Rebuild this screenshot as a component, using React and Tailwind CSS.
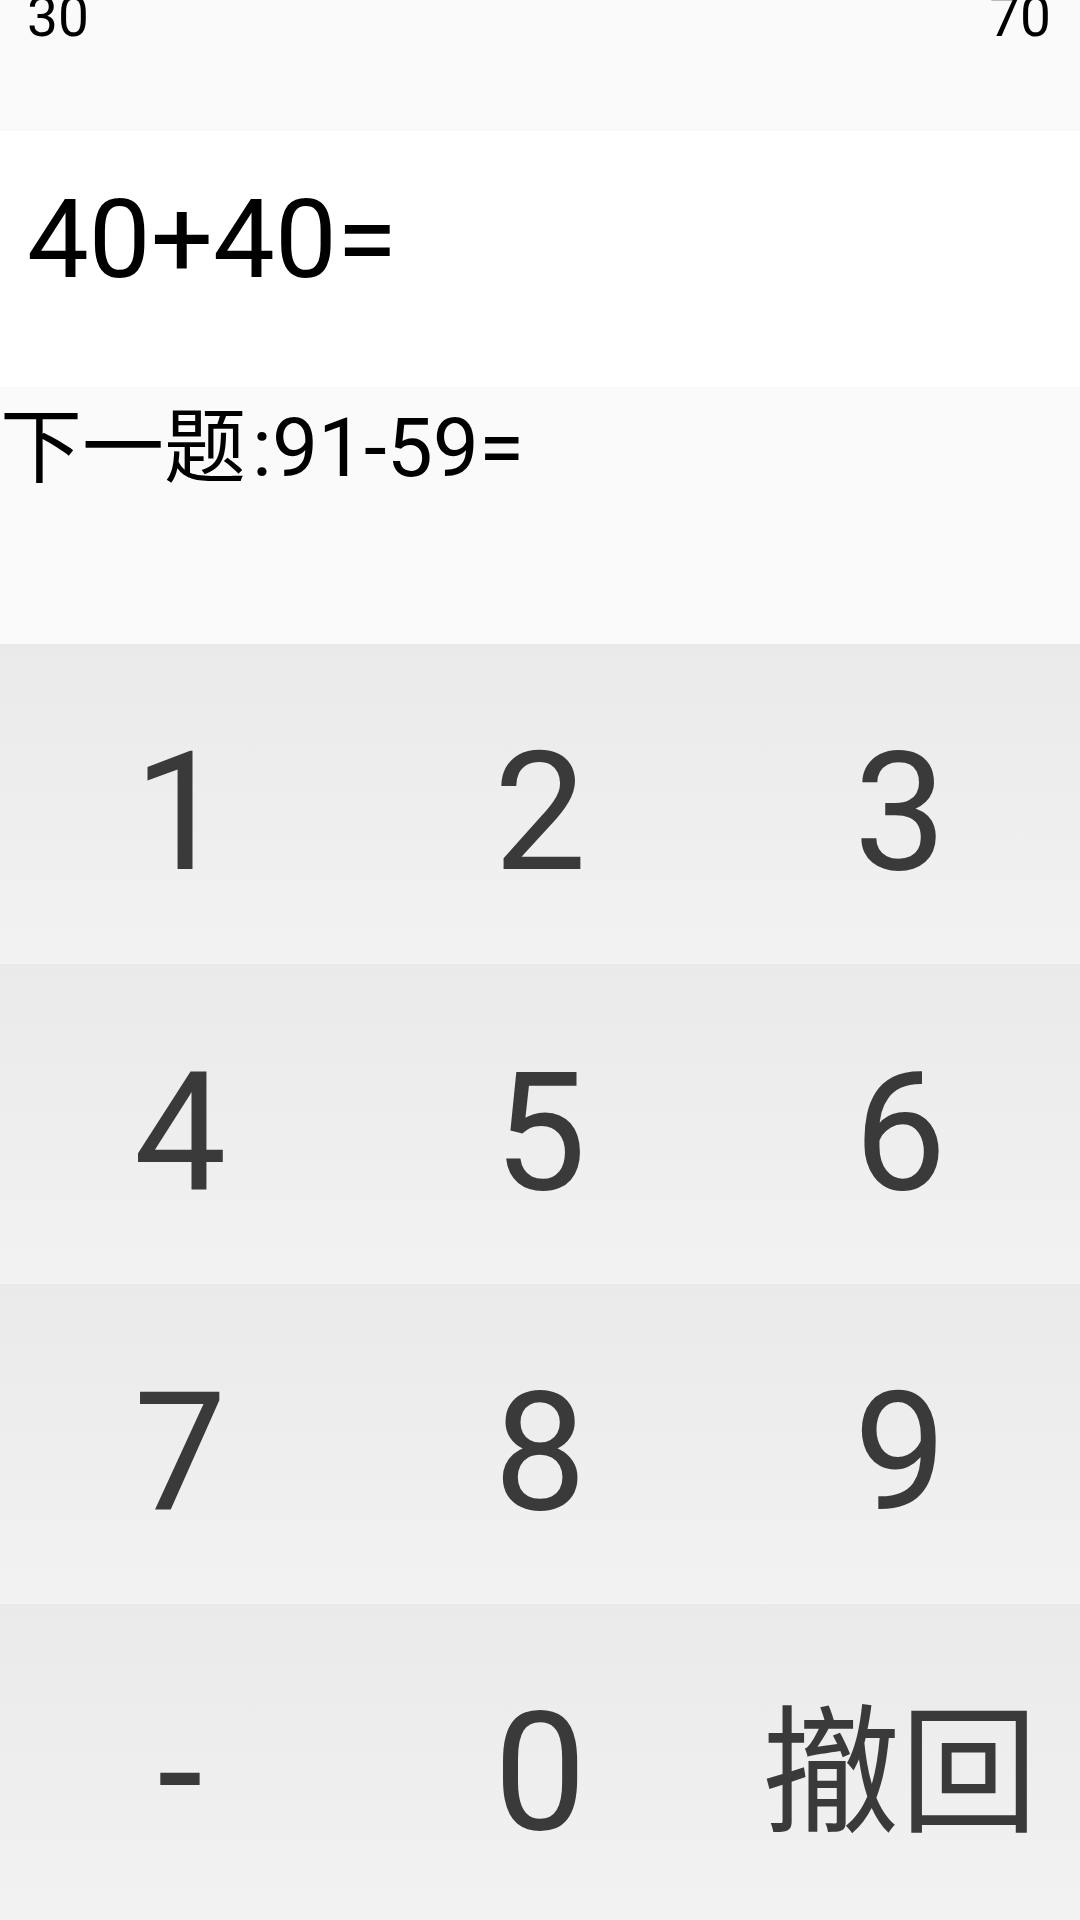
const keys = [
  ['1', '2', '3'],
  ['4', '5', '6'],
  ['7', '8', '9'],
  ['-', '0', '撤回'],
];

function Key({ label }) {
  const cjk = label === '撤回';
  return (
    <button
      className={
        'flex items-center justify-center bg-linear-to-b from-[#eaeaea] to-[#f2f2f2] border-b-2 border-[#f4f4f4] text-[#3a3a3a] ' +
        (cjk
          ? "text-[138px] pb-[4px] font-['Noto_Sans_CJK_SC',sans-serif]"
          : 'text-[165px] pt-[20px]')
      }
    >
      {label}
    </button>
  );
}

export default function App() {
  return (
    <div className="w-[1080px] h-[1920px] overflow-hidden bg-white font-['Roboto','Noto_Sans_CJK_SC',sans-serif]">
      <div className="h-[131px] bg-[#fafafa] flex justify-between pl-[27px] pr-[29px] text-[55px] leading-[34px] text-black">
        <span>30</span>
        <span>70</span>
      </div>

      <div className="h-[256px] bg-white pt-[44px] pl-[27px] text-[110px] leading-[129px] text-black">
        40+40=
      </div>

      <div className="h-[257px] bg-[#fafafa] pt-[13px] text-[82px] leading-[96px] text-black">
        下一题<span className="pl-[6px]">:91-59=</span>
      </div>

      <div className="grid grid-cols-3 grid-rows-[repeat(4,320px)]">
        {keys.flat().map((k) => (
          <Key key={k} label={k} />
        ))}
      </div>
    </div>
  );
}
